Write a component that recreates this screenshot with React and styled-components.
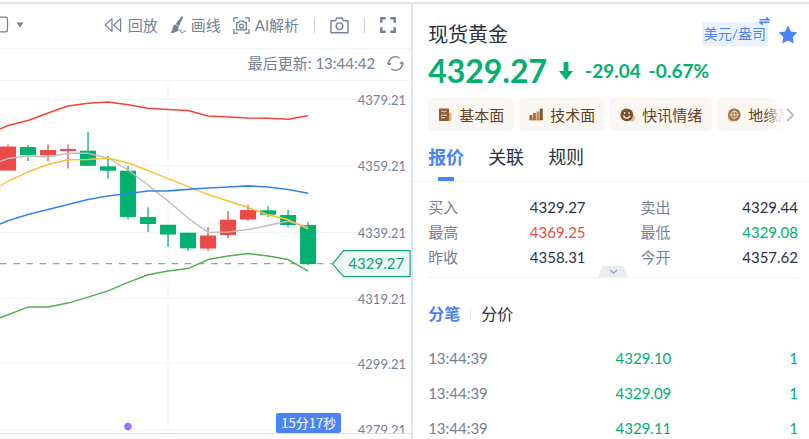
import React, { useState } from "react";
import styled, { createGlobalStyle, css } from "styled-components";

const UP = "#eb4b48";
const DOWN = "#02b06f";
const BLUE = "#4a84f6";
const MUTED = "#758195";

const AXIS = [
  { y: 99, label: "4379.21" },
  { y: 165, label: "4359.21" },
  { y: 232, label: "4339.21" },
  { y: 298, label: "4319.21" },
  { y: 363, label: "4299.21" },
  { y: 429, label: "4279.21" },
];

// x, top and bottom of the body, high, low
const CANDLES = [
  { x: 8, top: 146.5, bottom: 170.5, high: 144.5, low: 170.5, up: true },
  { x: 28, top: 147, bottom: 155, high: 145, low: 161 },
  { x: 48, top: 150, bottom: 155.3, high: 144.5, low: 161, up: true },
  { x: 68, top: 149, bottom: 151, high: 144.5, low: 168.5, up: true },
  { x: 88, top: 150.7, bottom: 165.7, high: 132, low: 165.7 },
  { x: 108, top: 166.3, bottom: 170.7, high: 156, low: 178.5 },
  { x: 128, top: 170.7, bottom: 217, high: 166, low: 219.5 },
  { x: 148, top: 217, bottom: 224, high: 207.3, low: 232 },
  { x: 168, top: 224.7, bottom: 234.5, high: 224.7, low: 247 },
  { x: 188, top: 232.7, bottom: 248.3, high: 232.7, low: 250.7 },
  { x: 208, top: 235.5, bottom: 248.5, high: 227, low: 250.7, up: true },
  { x: 228, top: 219.7, bottom: 235, high: 211, low: 238.3, up: true },
  { x: 248, top: 210, bottom: 219.5, high: 204.7, low: 220.7, up: true },
  { x: 268, top: 210.3, bottom: 214.7, high: 206, low: 217 },
  { x: 288, top: 215, bottom: 225, high: 209.7, low: 227 },
  { x: 308, top: 225, bottom: 264, high: 222, low: 265 },
];

const LINES = [
  {
    color: "#f44336",
    points:
      "0,129 8,125.5 28,120.5 48,113 68,106 88,103.3 108,102 128,104.7 148,108.3 168,109.5 188,110.5 208,116 228,117 248,118 268,118.3 288,119.3 308,115.7",
  },
  {
    color: "#bdbdbd",
    points:
      "0,161.5 8,158.5 28,156 48,157 68,153.3 88,153.3 108,158 128,170 148,185 168,201 188,218 208,232.3 228,232 248,229.5 268,225.5 288,221 308,227.5",
  },
  {
    color: "#fbc034",
    points:
      "0,186 8,181 28,172 48,164.5 68,159.7 88,159.5 108,158 128,163 148,170.5 168,178.5 188,186.5 208,194.5 228,201 248,207.5 268,214.7 288,219.5 308,229",
  },
  {
    color: "#3384f0",
    width: 1.6,
    points:
      "0,224 8,220.7 28,214.5 48,209.5 68,204.5 88,199.5 108,196 128,193.5 148,191 168,190.8 188,189.3 208,188 228,187 248,185.8 268,187 288,189.5 308,193.3",
  },
  {
    color: "#4caf50",
    points:
      "0,317.7 28,307 48,307 68,303 88,297 108,290.8 128,282.3 148,274.7 168,271 188,268.5 208,259.5 228,256 248,253.5 268,256 288,259.5 308,271",
  },
];

const QUOTES = [
  { label: "买入", value: "4329.27" },
  { label: "卖出", value: "4329.44" },
  { label: "最高", value: "4369.25", tone: "up" },
  { label: "最低", value: "4329.08", tone: "down" },
  { label: "昨收", value: "4358.31" },
  { label: "今开", value: "4357.62" },
];

const TICKS = [
  { id: 1, time: "13:44:39", price: "4329.10", volume: "1" },
  { id: 2, time: "13:44:39", price: "4329.09", volume: "1" },
  { id: 3, time: "13:44:39", price: "4329.11", volume: "1" },
];

// Icons
const FrameIcon = () => (
  <svg width="9" height="18" viewBox="0 0 9 18" fill="none" stroke="currentColor" strokeWidth="1.3">
    <path d="M0 1.2h5.5a2 2 0 0 1 2 2v10.6a2 2 0 0 1-2 2H0" />
  </svg>
);

const CaretIcon = () => (
  <svg width="8" height="6" viewBox="0 0 8 6" fill="currentColor">
    <path d="M0.4 0.5h7.2L4 5.6z" />
  </svg>
);

const RewindIcon = () => (
  <svg width="18" height="16" viewBox="0 0 18 16" fill="none" stroke="currentColor" strokeWidth="1.2" strokeLinejoin="round">
    <path d="M8 1.6v12.8L1.2 8z" />
    <path d="M16.6 1.6v12.8L9.8 8z" />
  </svg>
);

const BrushIcon = () => (
  <svg width="18" height="18" viewBox="0 0 18 18">
    <path d="M11.6 0.4c1.100-.2 1.600.8 1.200 1.600L9 10 5.600 8z" fill="currentColor" />
    <path d="M5.300 8.500l3.400 2c.300 2.500-1.400 4.700-4 5.500-1.400.5-3 .8-4.400.6 1.500-.9 2-2.500 2.300-4.400C2.900 10.500 3.800 8.900 5.300 8.500z" fill="currentColor" />
    <path d="M2 16.500c3.500.2 6-3.200 8.200-2.500 1.200.5.2 2.300 1.400 2.700 1.500.4 2.200-1.500 4.600-1.900" fill="none" stroke="currentColor" />
  </svg>
);

const ScanIcon = () => (
  <svg width="17" height="17" viewBox="0 0 17 17" fill="none" stroke="currentColor" strokeWidth="1.300">
    <path d="M.9 5V.9H5M12 .9h4.100V5M16.100 12v4.100H12M5 16.100H.9V12" />
    <path d="M3.600 5.700h2.200l1-1.500h3.400l1 1.500h2.200v7.200H3.600z" />
    <circle cx="8.500" cy="9.100" r="1.900" />
  </svg>
);

const CameraIcon = () => (
  <svg width="19" height="17" viewBox="0 0 19 17" fill="none" stroke="currentColor" strokeWidth="1.400" strokeLinejoin="round">
    <path d="M1 3.700h4.500L6.800 1h5.400l1.300 2.700H18V15.700H1z" />
    <circle cx="9.500" cy="9.200" r="3.300" />
  </svg>
);

const FullscreenIcon = () => (
  <svg width="16" height="16" viewBox="0 0 16 16" fill="none" stroke="currentColor" strokeWidth="2.400">
    <path d="M1.300 5.700V1.300h4.400M10.300 1.300h4.400v4.400M14.700 10.300v4.400h-4.400M5.700 14.700H1.300v-4.400" />
  </svg>
);

const RefreshIcon = () => (
  <svg width="17" height="17" viewBox="0 0 17 17" fill="none" stroke="currentColor" strokeWidth="1.300">
    <path d="M1.800 9.500A6.800 6.800 0 0 1 12.800 3.200M15.200 7.500A6.800 6.800 0 0 1 4.200 13.800" />
    <path d="M.3 7.500l1.500 2.200 2.400-1.300M16.700 9.500l-1.500-2.200-2.400 1.300" />
  </svg>
);

const SwapIcon = () => (
  <svg width="11" height="8" viewBox="0 0 11 8" fill="none" stroke="currentColor" strokeWidth="1.600">
    <path d="M.5 2.800h9.700L7.200.4M10.500 5.200H.8l3 2.400" />
  </svg>
);

const StarIcon = () => (
  <svg width="20" height="19" viewBox="0 0 20 19" fill="currentColor">
    <path d="M10 .6l2.900 5.900 6.500.9-4.700 4.600 1.100 6.400L10 15.400l-5.800 3 1.100-6.400L.6 7.400l6.500-.9z" />
  </svg>
);

const DownArrowIcon = () => (
  <svg width="14" height="18" viewBox="0 0 14 18" fill="currentColor">
    <path d="M4.600 0h4.800v9H14l-7 9-7-9h4.600z" />
  </svg>
);

const DocIcon = () => (
  <svg width="14" height="14" viewBox="0 0 14 14">
    <path d="M8 4.500h5.500v7a1.500 1.500 0 0 1-1.500 1.500H8z" fill="#dcb78d" />
    <rect x="1" y="0.500" width="10" height="12.500" rx="1" fill="#8a5f38" />
    <path d="M3 4l1.500-1 1.500 1 2.500-1M3 7.200h6M3 9.700h4" fill="none" stroke="#f0dcc4" />
  </svg>
);

const BarsIcon = () => (
  <svg width="14" height="14" viewBox="0 0 14 14">
    <path d="M0 11.500h14" stroke="#dcb78d" strokeWidth="2.400" />
    <rect x="0.500" y="7" width="2.900" height="5" fill="#9c6b3f" />
    <rect x="4" y="5" width="2.900" height="7" fill="#a67446" />
    <rect x="7.500" y="3.500" width="2.900" height="8.500" fill="#b98a5e" />
    <rect x="10.800" y="0.500" width="2.900" height="11.500" fill="#82552f" />
  </svg>
);

const SmileIcon = () => (
  <svg width="15" height="14" viewBox="0 0 15 14">
    <circle cx="11.500" cy="10" r="3.400" fill="#dfbd95" />
    <circle cx="6.800" cy="6.800" r="6.400" fill="#7a4f2a" />
    <path d="M4.600 4v2M9 4v2M3.500 7.500a3.400 3.400 0 0 0 6.600 0" fill="none" stroke="#f2dfc8" strokeWidth="1.300" />
  </svg>
);

const GlobeIcon = () => (
  <svg width="14" height="14" viewBox="0 0 14 14" fill="none">
    <circle cx="5" cy="9.500" r="4.300" fill="#dfbd95" />
    <circle cx="7.300" cy="6.700" r="6.300" fill="#9a7048" />
    <circle cx="7.300" cy="6.700" r="3.500" stroke="#ecd6ba" />
    <path d="M7.300 2v3M7.300 8.400v3M2.600 6.700h3M9 6.700h3" stroke="#ecd6ba" />
    <circle cx="7.300" cy="6.700" r="1.300" fill="#ecd6ba" />
  </svg>
);

const NextIcon = () => (
  <svg width="9" height="14" viewBox="0 0 9 14" fill="none" stroke="#b3bccb" strokeWidth="1.800">
    <path d="M1.200 1l6 6-6 6" />
  </svg>
);

const ChevronIcon = () => (
  <svg width="9" height="6" viewBox="0 0 9 6" fill="none" stroke="#9aa5b5" strokeWidth="1.300">
    <path d="M1 1l3.500 3.300L8 1" />
  </svg>
);

const CHIPS = [
  { label: "基本面", icon: <DocIcon /> },
  { label: "技术面", icon: <BarsIcon /> },
  { label: "快讯情绪", icon: <SmileIcon /> },
  { label: "地缘局势", icon: <GlobeIcon /> },
];

const PriceChart = () => (
  <ChartSvg viewBox="0 81 411 352" role="img" aria-label="K线图">
    <defs>
      <linearGradient id="eventDot">
        <stop offset="0.4" stopColor="#857cf6" />
        <stop offset="1" stopColor="#c07fc4" />
      </linearGradient>
    </defs>
    {AXIS.map(({ y }) => (
      <rect key={y} x="0" y={y} width="411" height="1" fill="#f3f4f6" />
    ))}
    <rect x="167" y="81" width="2" height="352" fill="#f9f9fa" />
    <line x1="0" y1="263.5" x2="332" y2="263.5" stroke="#5fbf9b" strokeWidth="1.2" strokeDasharray="6.500 6.700" />
    {CANDLES.map(({ x, top, bottom, high, low, up }) => (
      <g key={x} fill={up ? UP : DOWN}>
        <rect x={x - 0.8} y={high} width="1.600" height={low - high} opacity="0.8" />
        <rect x={x - 8} y={top} width="16" height={bottom - top} />
      </g>
    ))}
    {LINES.map(({ color, width = 1.4, points }) => (
      <polyline key={color} points={points} fill="none" stroke={color} strokeWidth={width} strokeLinejoin="round" />
    ))}
    {AXIS.map(({ y, label }) => (
      <AxisText key={label} x="406" y={y + 6}>
        {label}
      </AxisText>
    ))}
    <path d="M332.500 264L343.500 250.500H410V276.500H343.500z" fill="#edf9f5" stroke="#1aa377" strokeWidth="1.200" />
    <TagText x="404" y="269">
      4329.27
    </TagText>
    <circle cx="128" cy="426.500" r="3.800" fill="url(#eventDot)" />
  </ChartSvg>
);

const App = () => {
  const [tab, setTab] = useState("报价");
  const [listTab, setListTab] = useState("分笔");

  return (
    <>
      <GlobalStyle />
      <Page>
        <ChartPanel>
          <Toolbar>
            <FrameButton type="button" aria-label="图表类型">
              <FrameIcon />
              <CaretIcon />
            </FrameButton>
            <ToolButton type="button" $gap={6}>
              <RewindIcon />
              回放
            </ToolButton>
            <ToolButton type="button" $gap={3}>
              <BrushIcon />
              画线
            </ToolButton>
            <ToolButton type="button" $gap={5}>
              <ScanIcon />
              AI解析
            </ToolButton>
            <ToolActions>
              <Separator />
              <ToolButton type="button" aria-label="截图">
                <CameraIcon />
              </ToolButton>
              <Separator />
              <ToolButton type="button" aria-label="全屏">
                <FullscreenIcon />
              </ToolButton>
            </ToolActions>
          </Toolbar>
          <UpdateBar>
            <span>最后更新: 13:44:42</span>
            <ToolButton type="button" aria-label="刷新">
              <RefreshIcon />
            </ToolButton>
          </UpdateBar>
          <ChartArea>
            <PriceChart />
            <Countdown>15分17秒</Countdown>
          </ChartArea>
        </ChartPanel>

        <QuotePanel>
          <Header>
            <Name>现货黄金</Name>
            <UnitButton type="button">
              美元/盎司
              <SwapBadge>
                <SwapIcon />
              </SwapBadge>
            </UnitButton>
            <StarButton type="button" aria-label="自选">
              <StarIcon />
            </StarButton>
          </Header>
          <PriceRow>
            <Price>4329.27</Price>
            <DownArrowIcon />
            <Changes>
              <span>-29.04</span>
              <span>-0.67%</span>
            </Changes>
          </PriceRow>
          <ChipRow>
            {CHIPS.map(({ label, icon }) => (
              <Chip key={label} type="button">
                {icon}
                {label}
              </Chip>
            ))}
            <NextButton type="button" aria-label="更多">
              <NextIcon />
            </NextButton>
          </ChipRow>
          <Tabs>
            {["报价", "关联", "规则"].map((name) => (
              <Tab key={name} type="button" $active={tab === name} onClick={() => setTab(name)}>
                {name}
              </Tab>
            ))}
          </Tabs>
          <QuoteGrid>
            {QUOTES.map(({ label, value, tone }) => (
              <QuoteItem key={label}>
                <dt>{label}</dt>
                <QuoteValue $tone={tone}>{value}</QuoteValue>
              </QuoteItem>
            ))}
          </QuoteGrid>
          <FoldRow>
            <FoldButton type="button" aria-label="展开">
              <ChevronIcon />
            </FoldButton>
          </FoldRow>
          <ListTabs>
            <ListTab type="button" $active={listTab === "分笔"} onClick={() => setListTab("分笔")}>
              分笔
            </ListTab>
            <ListDivider />
            <ListTab type="button" $active={listTab === "分价"} onClick={() => setListTab("分价")}>
              分价
            </ListTab>
          </ListTabs>
          <TickTable>
            <tbody>
              {TICKS.map(({ id, time, price, volume }) => (
                <tr key={id}>
                  <TimeCell>{time}</TimeCell>
                  <TickCell>{price}</TickCell>
                  <TickCell>{volume}</TickCell>
                </tr>
              ))}
            </tbody>
          </TickTable>
        </QuotePanel>
      </Page>
    </>
  );
};

export default App;

// Styled Components
const GlobalStyle = createGlobalStyle`
  * {
    box-sizing: border-box;
  }
  body {
    margin: 0;
    background: #fff;
    font-family: Lato, "Noto Sans CJK SC", sans-serif;
    font-size: 15px;
    color: #2b3340;
  }
  button {
    font: inherit;
    color: inherit;
    background: none;
    border: none;
    padding: 0;
    cursor: pointer;
    white-space: nowrap;
  }
  svg {
    display: block;
    flex-shrink: 0;
  }
`;

const Page = styled.div`
  height: 100vh;
  padding-top: 2px;
  display: grid;
  grid-template-columns: 31fr 30fr;
  overflow: hidden;
`;

const panel = css`
  min-width: 0;
  border-top: 2px solid #e1e5ec;
`;

const ChartPanel = styled.section`
  ${panel}
`;

const Toolbar = styled.div`
  height: 45px;
  display: flex;
  align-items: center;
  gap: 12px;
  padding-right: 15px;
  padding-bottom: 2px;
  border-bottom: 1px solid #f1f2f4;
  color: ${MUTED};
`;

const ToolButton = styled.button`
  display: flex;
  align-items: center;
  gap: ${(props) => props.$gap || 0}px;
  line-height: 22px;
`;

const FrameButton = styled(ToolButton)`
  gap: 7px;
  margin-right: auto;
`;

const ToolActions = styled.div`
  display: flex;
  align-items: center;
  gap: 15px;
  margin-left: 3px;
`;

const Separator = styled.span`
  width: 1px;
  height: 15px;
  background: #c9d0da;
`;

const UpdateBar = styled.div`
  height: 32px;
  display: flex;
  align-items: center;
  justify-content: flex-end;
  gap: 12px;
  padding-right: 7px;
  padding-bottom: 3px;
  border-bottom: 1px solid #f4f5f7;
  color: ${MUTED};
  line-height: 22px;
`;

const ChartArea = styled.div`
  position: relative;
  border-bottom: 1px solid #dadfe8;
`;

const ChartSvg = styled.svg`
  width: 100%;
  height: auto;
`;

const AxisText = styled.text`
  font-size: 13px;
  fill: ${MUTED};
  text-anchor: end;
`;

const TagText = styled(AxisText)`
  font-size: 15px;
  fill: #17a072;
`;

const Countdown = styled.span`
  position: absolute;
  right: 17%;
  bottom: 0;
  padding: 0 5px;
  border-radius: 2px;
  background: ${BLUE};
  color: #fff;
  font-family: "Noto Sans CJK SC", sans-serif;
  font-size: 13px;
  line-height: 20px;
`;

const QuotePanel = styled.section`
  ${panel}
  border-left: 2px solid #e1e5ec;
`;

const Header = styled.div`
  display: flex;
  align-items: center;
  gap: 10px;
  padding: 16px 11px 0 15px;
`;

const Name = styled.h1`
  flex: 1;
  margin: 0;
  font-size: 20px;
  font-weight: 400;
  line-height: 28px;
`;

const UnitButton = styled.button`
  position: relative;
  padding: 0 2px;
  border-radius: 2px;
  background: #eaf1ff;
  color: ${BLUE};
  font-size: 14px;
  line-height: 24px;
`;

const SwapBadge = styled.span`
  position: absolute;
  top: -5px;
  right: -2px;
`;

const StarButton = styled.button`
  color: ${BLUE};
`;

const PriceRow = styled.div`
  display: flex;
  align-items: center;
  gap: 12px;
  padding: 4px 15px 0;
  color: ${DOWN};
  line-height: 38px;
`;

const Price = styled.strong`
  font-size: 32px;
`;

const Changes = styled.div`
  display: flex;
  gap: 8px;
  font-size: 19px;
  font-weight: 700;
`;

const ChipRow = styled.div`
  position: relative;
  display: flex;
  gap: 5px;
  margin: 8px 11px 0 15px;
  overflow: hidden;
`;

const Chip = styled.button`
  flex-shrink: 0;
  display: flex;
  align-items: center;
  gap: 7px;
  height: 33px;
  padding: 0 10px;
  border-radius: 5px;
  background: #faf6f1;
  color: #63421f;
`;

const NextButton = styled.button`
  position: absolute;
  top: 0;
  right: 0;
  height: 100%;
  padding: 0 3px 0 22px;
  background: linear-gradient(to right, rgba(255, 255, 255, 0), #fff 60%);
`;

const Tabs = styled.div`
  display: flex;
  gap: 24px;
  padding: 0 15px;
  border-bottom: 1px solid #f1f2f4;
`;

const Tab = styled.button`
  position: relative;
  height: 50px;
  font-size: 18px;
  ${(props) =>
    props.$active &&
    css`
      color: ${BLUE};
      font-weight: 700;
      &::after {
        content: "";
        position: absolute;
        left: 10px;
        right: 10px;
        bottom: 0;
        height: 4px;
        background: ${BLUE};
      }
    `}
`;

const QuoteGrid = styled.dl`
  display: grid;
  grid-template-columns: 1fr 1fr;
  column-gap: 55px;
  margin: 0;
  padding: 13px 11px 0 15px;
`;

const QuoteItem = styled.div`
  display: flex;
  justify-content: space-between;
  line-height: 25px;
  color: ${MUTED};
`;

const QuoteValue = styled.dd`
  margin: 0;
  color: ${(props) => (props.$tone === "up" ? UP : props.$tone === "down" ? DOWN : "#2b3340")};
`;

const FoldRow = styled.div`
  display: flex;
  justify-content: center;
  align-items: flex-end;
  height: 8px;
  margin: 0 11px 0 15px;
  border-bottom: 1px solid #f1f2f4;
`;

const FoldButton = styled.button`
  display: flex;
  justify-content: center;
  align-items: center;
  width: 30px;
  height: 11px;
  background: #e8ebf0;
  clip-path: polygon(15% 0, 85% 0, 100% 100%, 0 100%);
`;

const ListTabs = styled.div`
  display: flex;
  align-items: center;
  gap: 10px;
  padding: 24px 15px 14px;
`;

const ListTab = styled.button`
  font-size: 16px;
  line-height: 24px;
  color: ${(props) => (props.$active ? BLUE : "inherit")};
  font-weight: ${(props) => (props.$active ? 700 : 400)};
`;

const ListDivider = styled.span`
  width: 1px;
  height: 10px;
  background: #dfe3e9;
`;

const TickTable = styled.table`
  width: 100%;
  table-layout: fixed;
  border-collapse: collapse;
`;

const TickCell = styled.td`
  width: 32%;
  height: 35px;
  padding: 0 11px 0 0;
  text-align: right;
  color: ${DOWN};
`;

const TimeCell = styled(TickCell)`
  width: 36%;
  padding: 0 0 0 15px;
  text-align: left;
  color: ${MUTED};
`;
